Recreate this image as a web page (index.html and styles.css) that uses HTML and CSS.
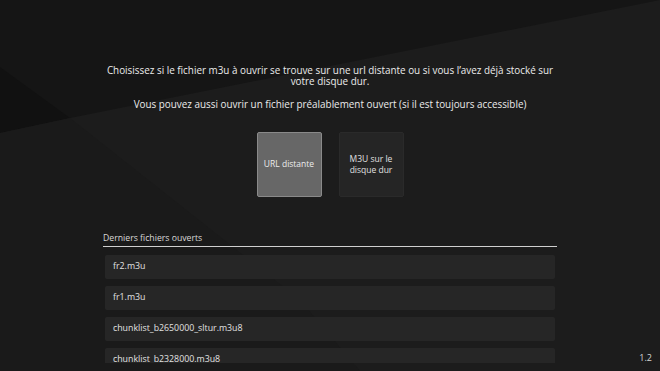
FILE: index.html
```html
<!DOCTYPE html>
<html lang="fr">
<head>
    <meta charset="UTF-8">
    <meta name="viewport" content="width=device-width, initial-scale=1.0">
    <title>Ouvrir un fichier M3U</title>
    <link rel="stylesheet" href="styles.css">
</head>
<body>

<svg class="backdrop" viewBox="0 0 660 371" preserveAspectRatio="none" aria-hidden="true">
    <rect width="660" height="371" fill="#1c1c1c"/>
    <polygon points="0,0 660,0 70,118 0,133" fill="#151515"/>
    <polygon points="0,67 70,118 0,133" fill="#111111"/>
    <polygon points="0,133 70,118 300,300 360,371 0,371" fill="#1a1a1a"/>
</svg>

<main class="screen">
    <div class="intro">
        <p>Choisissez si le fichier m3u à ouvrir se trouve sur une url distante ou si vous l’avez déjà stocké sur votre disque dur.</p>
        <p>Vous pouvez aussi ouvrir un fichier préalablement ouvert (si il est toujours accessible)</p>
    </div>

    <div class="choices">
        <button class="choice active">URL distante</button>
        <button class="choice">M3U sur le<br>disque dur</button>
    </div>

    <section class="recent">
        <h3>Derniers fichiers ouverts</h3>
        <ul class="files">
            <li>fr2.m3u</li>
            <li>fr1.m3u</li>
            <li>chunklist_b2650000_sltur.m3u8</li>
            <li>chunklist_b2328000.m3u8</li>
        </ul>
    </section>
</main>

<span class="version">1.2</span>

</body>
</html>
```

FILE: styles.css
```css
body {
    margin: 0;
    padding: 0;
    width: 660px;
    height: 371px;
    overflow: hidden;
    position: relative;
    font-family: "Open Sans", Lato, sans-serif;
    color: #ebebeb;
    background-color: #1c1c1c;
}

.backdrop {
    position: absolute;
    top: 0;
    left: 0;
    width: 660px;
    height: 371px;
    z-index: 0;
}

.screen {
    position: relative;
    z-index: 1;
    width: 454px;
    margin: 0 auto;
    padding-top: 65px;
}

.intro {
    text-align: center;
    font-size: 9.9px;
    line-height: 11.3px;
}

.intro p {
    margin: 0;
}

.intro p + p {
    margin-top: 11.3px;
}

.choices {
    display: flex;
    justify-content: center;
    gap: 17px;
    margin-top: 22px;
}

.choice {
    width: 65px;
    height: 65px;
    padding: 0 6px;
    border: 1px solid #2a2a2a;
    border-radius: 2px;
    background-color: #252525;
    color: #e0e0e0;
    font-family: inherit;
    font-size: 8.5px;
    line-height: 10.5px;
    cursor: pointer;
}

.choice.active {
    background-color: #676767;
    border-color: #8a8a8a;
    color: #ececec;
}

.recent {
    margin-top: 36px;
}

.recent h3 {
    margin: 0;
    padding-bottom: 2px;
    font-size: 8.7px;
    line-height: 11px;
    font-weight: normal;
    color: #d8d8d8;
    border-bottom: 1.5px solid #cfcfcf;
}

.files {
    list-style: none;
    margin: 8px 0 0;
    padding: 0 2px;
    height: 108px;
    overflow: hidden;
    display: flex;
    flex-direction: column;
    gap: 7.5px;
}

.files li {
    flex: none;
    height: 23.5px;
    line-height: 23.5px;
    padding: 0 8px;
    border-radius: 2px;
    background-color: #262626;
    font-size: 8.8px;
    color: #e2e2e2;
}

.version {
    position: absolute;
    right: 8px;
    bottom: 7px;
    z-index: 1;
    font-size: 9px;
    color: #d4d4d4;
}
```
